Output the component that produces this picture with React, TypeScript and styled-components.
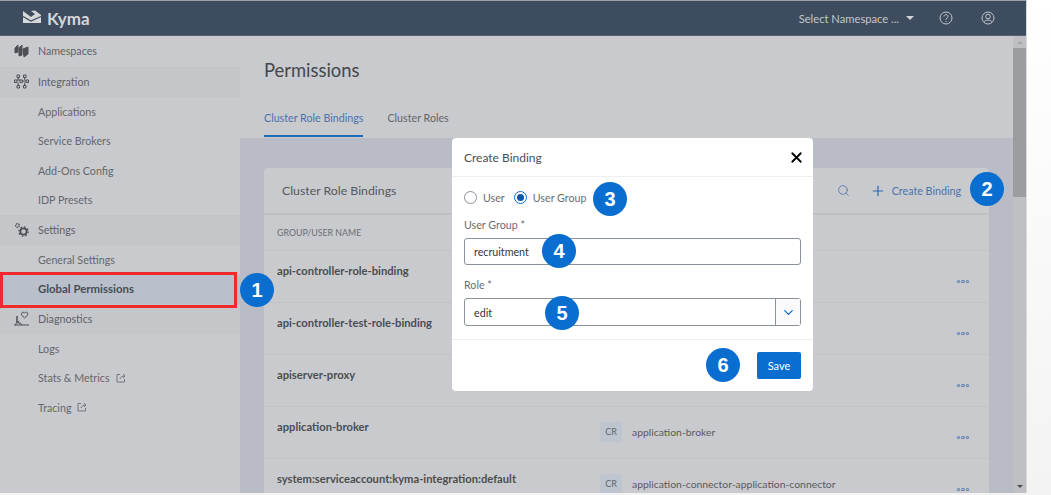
import React from "react";
import styled, {createGlobalStyle} from "styled-components";
import {X, ChevronDown, Search, Plus} from "lucide-react";

const GlobalStyle = createGlobalStyle`
  html, body {
    margin: 0;
    padding: 0;
    background: linear-gradient(#ffffff, #f3f3f3);
    overflow: hidden;
  }
  * {
    box-sizing: border-box;
  }
`;

const Page = styled.div`
  position: relative;
  width: 1051px;
  height: 495px;
  overflow: hidden;
  font-family: Lato, "Noto Sans", sans-serif;
  font-size: 10.7px;
`;
const Shell = styled.div`
  display: flex;
  flex-direction: column;
  width: 1027px;
  height: 493px;
  border-right: 1px solid #d8d9da;
  border-top: 1px solid #9a9ea5;
  background: #c9cacd;
`;
const Header = styled.header`
  display: flex;
  align-items: center;
  flex: 0 0 35px;
  padding: 0 31px 0 22px;
  background: #3d4c5e;
  border-bottom: 1px solid #566272;
  color: #c3c7cd;
`;
const Brand = styled.div`
  display: flex;
  align-items: center;
  gap: 5px;
  margin-right: auto;
  font-size: 17px;
  font-weight: 700;
  color: #d5d7d9;
`;
const NamespaceSelect = styled.div`
  display: flex;
  align-items: center;
  gap: 7px;
  margin-right: 25px;
  font-size: 11.2px;
  white-space: nowrap;
`;
const Caret = styled.span`
  width: 0;
  height: 0;
  border-left: 4px solid transparent;
  border-right: 4px solid transparent;
  border-top: 4px solid #d0d3d7;
`;
const HeaderIcon = styled.svg<{ $gap?: number }>`
  width: 14px;
  height: 14px;
  margin-left: ${p => p.$gap || 0}px;
  fill: none;
  stroke: #c3c7cd;
  stroke-width: 1;
`;
const Body = styled.div`
  display: flex;
  flex: 1;
  min-height: 0;
`;
const Sidebar = styled.nav`
  display: flex;
  flex-direction: column;
  flex: 0 0 240px;
  background: #c9cacd;
`;
const NavGroup = styled.div<{ $band?: boolean }>`
  display: flex;
  align-items: center;
  gap: 9px;
  height: ${p => (p.$band ? "30px" : "31px")};
  padding-left: 14px;
  padding-bottom: 2px;
  background: ${p => (p.$band ? "#c5c6ca" : "transparent")};
  border-top: ${p => (p.$band ? "1px solid #c2c3c7" : "0")};
  color: #5e6268;
`;
const NavIcon = styled.svg`
  width: 15px;
  height: 15px;
  flex: none;
  fill: none;
  stroke: #4c4f54;
  stroke-width: 1;
`;
const NavItem = styled.div<{ $active?: boolean }>`
  display: flex;
  align-items: center;
  gap: 6px;
  height: 29.5px;
  padding-left: 38px;
  padding-bottom: 1px;
  color: ${p => (p.$active ? "#4a4d52" : "#64676d")};
  font-size: ${p => (p.$active ? "11.4px" : "inherit")};
  font-weight: ${p => (p.$active ? 700 : 400)};
`;
const SelectedItem = styled(NavItem)`
  position: relative;
  padding-bottom: 2px;
  background: #b9c0cb;
  &::after {
    content: "";
    position: absolute;
    left: 0;
    top: -3px;
    width: 237px;
    height: 36px;
    box-sizing: border-box;
    border: 3px solid #ee2a2e;
    pointer-events: none;
  }
`;
const ExternalIcon = styled.svg`
  width: 10px;
  height: 10px;
  fill: none;
  stroke: #74777c;
  stroke-width: 1;
`;
const Main = styled.main`
  display: flex;
  flex-direction: column;
  flex: 1;
  min-width: 0;
  overflow: hidden;
`;
const PageHead = styled.div`
  display: flex;
  flex-direction: column;
  flex: 0 0 102px;
  padding: 0 24px;
  background: #c9cacd;
`;
const Title = styled.h1`
  margin: 22px 0 0;
  font-size: 18.4px;
  line-height: 24px;
  font-weight: 400;
  color: #43474d;
`;
const Tabs = styled.div`
  display: flex;
  gap: 24px;
  margin-top: 21px;
`;
const Tab = styled.div<{ $active?: boolean }>`
  height: 34px;
  padding-top: 8px;
  line-height: 14px;
  color: ${p => (p.$active ? "#4a72ae" : "#63666c")};
  border-bottom: ${p => (p.$active ? "2px solid #1f68b5" : "2px solid transparent")};
`;
const Content = styled.div`
  flex: 1;
  padding: 30px 24px 0;
  background: #b9bcc5;
  overflow: hidden;
`;
const Card = styled.section`
  background: #c9cacd;
  border-radius: 4px 4px 0 0;
`;
const CardHead = styled.div`
  display: flex;
  align-items: center;
  height: 47px;
  padding: 0 28px 0 18px;
  border-bottom: 2px solid #c0c1c5;
`;
const CardTitle = styled.h2`
  margin: 0 auto 0 0;
  font-size: 12.3px;
  font-weight: 400;
  color: #55585e;
`;
const CreateButton = styled.div`
  display: flex;
  align-items: center;
  gap: 6px;
  margin-left: 20px;
  color: #4a72ae;
`;
const ColumnHead = styled.div`
  display: flex;
  align-items: center;
  height: 36px;
  padding-left: 13px;
  font-size: 8.8px;
  color: #6a6d73;
  border-bottom: 1px solid #c2c3c7;
`;
const Row = styled.div`
  display: grid;
  grid-template-columns: 323px 1fr 12px;
  height: 52px;
  padding: 0 20px 0 13px;
  border-bottom: 1px solid #c2c3c7;
`;
const RowName = styled.div`
  padding-top: 12px;
  line-height: 16px;
  font-size: 11.2px;
  font-weight: 700;
  color: #4a4d52;
`;
const RoleCell = styled.div`
  display: flex;
  align-items: center;
  gap: 10px;
  padding-bottom: 2px;
  font-size: 10.4px;
  color: #585b61;
`;
const RoleTag = styled.span`
  display: flex;
  align-items: center;
  justify-content: center;
  width: 22px;
  height: 20px;
  border-radius: 2px;
  background: #bec5ce;
  font-size: 9px;
  color: #5f666e;
`;
const Dots = styled.div`
  display: flex;
  align-items: center;
  gap: 1px;
  padding-top: 10px;
`;
const Dot = styled.span`
  width: 3.5px;
  height: 3.5px;
  border-radius: 50%;
  border: 1px solid #5c80b8;
`;
const Scrollbar = styled.div`
  display: flex;
  flex-direction: column;
  align-items: center;
  flex: 0 0 13px;
  background: #bfc0c4;
`;
const ScrollCaret = styled.span<{ $down?: boolean }>`
  flex: none;
  margin: 5px 0;
  width: 0;
  height: 0;
  border-left: 3px solid transparent;
  border-right: 3px solid transparent;
  ${p => (p.$down ? "border-top: 3px solid #4c4d50;" : "border-bottom: 3px solid #a4a5a8;")}
`;
const Thumb = styled.div`
  flex: 0 0 149px;
  width: 100%;
  margin-top: -1px;
  background: #9c9da0;
`;
const ScrollSpace = styled.div`
  flex: 1;
`;
const Dialog = styled.div`
  position: absolute;
  left: 452px;
  top: 138px;
  display: flex;
  flex-direction: column;
  width: 361px;
  height: 253px;
  background: #ffffff;
  border-radius: 4px;
  color: #32363a;
`;
const DialogHead = styled.div`
  display: flex;
  align-items: center;
  justify-content: space-between;
  flex: 0 0 39px;
  padding: 0 8px 0 12px;
  border-bottom: 1px solid #eeeeef;
  font-size: 12px;
  color: #4a4d52;
`;
const DialogBody = styled.div`
  display: flex;
  flex-direction: column;
  flex: 0 0 162px;
  padding: 0 12px;
  border-bottom: 1px solid #eeeeef;
`;
const RadioRow = styled.div`
  display: flex;
  align-items: center;
  gap: 9px;
  height: 41px;
  color: #6a6d72;
`;
const RadioOption = styled.label`
  display: flex;
  align-items: center;
  gap: 6px;
`;
const RadioMark = styled.span<{ $checked?: boolean }>`
  display: flex;
  align-items: center;
  justify-content: center;
  width: 13px;
  height: 13px;
  border-radius: 50%;
  border: 1px solid ${p => (p.$checked ? "#0a6ed1" : "#89919a")};
  &::after {
    content: "";
    display: ${p => (p.$checked ? "block" : "none")};
    width: 7px;
    height: 7px;
    border-radius: 50%;
    background: #0a58a8;
  }
`;
const FieldLabel = styled.div`
  height: 14px;
  line-height: 14px;
  margin-bottom: 6px;
  color: #6a6d72;
`;
const InputBox = styled.div<{ $height: number }>`
  display: flex;
  align-items: center;
  justify-content: space-between;
  width: 337px;
  height: ${p => p.$height}px;
  margin-bottom: 13px;
  padding-left: 9px;
  border: 1px solid #89919a;
  border-radius: 3px;
  color: #32363a;
`;
const SelectButton = styled.span`
  display: flex;
  align-items: center;
  justify-content: center;
  width: 25px;
  height: 100%;
  border-left: 1px solid #89919a;
  background: #fafafa;
`;
const DialogFoot = styled.div`
  display: flex;
  align-items: center;
  justify-content: flex-end;
  flex: 1;
  padding: 0 12px 1px;
`;
const SaveButton = styled.button`
  width: 44px;
  height: 27px;
  padding: 0;
  border: 0;
  border-radius: 2px;
  background: #0a6ed1;
  color: #ffffff;
  font: inherit;
  font-size: 11px;
`;
const Marker = styled.div<{ $x: number; $y: number }>`
  position: absolute;
  left: ${p => p.$x - 17}px;
  top: ${p => p.$y - 17}px;
  display: flex;
  align-items: center;
  justify-content: center;
  width: 34px;
  height: 34px;
  border-radius: 50%;
  background: #0a6ed1;
  color: #ffffff;
  font-family: "Liberation Sans", Arial, sans-serif;
  font-size: 20px;
  font-weight: 700;
`;

const KymaLogo = () => (
  <svg width="20" height="16" viewBox="0 0 20 16">
    <path d="M1 1 L9 7 L13 4 L9 1 L13 0.500 L19 5 V13 H1 Z" fill="#d5d7d9" />
    <path d="M1 6.500 L9 11 L19 6.500" stroke="#3d4c5e" strokeWidth="1.2" fill="none" />
  </svg>
);
const External = () => (
  <ExternalIcon viewBox="0 0 10 10">
    <path d="M4 1.5H1V9H8.5V6" />
    <path d="M4 6C4.5 4 6 3 9 3M7 1l2 2-2 2" />
  </ExternalIcon>
);
const NamespacesIcon = () => (
  <NavIcon viewBox="0 0 15 15">
    <path d="M1 5l3-3v7l-3 1zM5 5l3-3v10l-3 1zM9 6l5-2v7l-4 3z" fill="#4c4f54" />
  </NavIcon>
);
const IntegrationIcon = () => (
  <NavIcon viewBox="0 0 15 15">
    <path d="M3 1h2.500v2.500H3zM9.500 1H12v2.500H9.500zM.5 6H3v2.500H.5zM6 6h2.500v2.500H6zM12 6h2.500v2.500H12zM3 11.500h2.500V14H3zM9.500 11.500H12V14H9.500zM3 6h3M8.500 7h3.500M4.200 3.500V6M10.700 3.500V6M4.200 8.500v3M10.700 8.500v3" />
  </NavIcon>
);
const SettingsIcon = () => (
  <NavIcon viewBox="0 0 15 15">
    <circle cx="3.500" cy="3.500" r="1.800" strokeDasharray="1.500 .6" strokeWidth="1.300" />
    <circle cx="9.500" cy="9.500" r="3.200" strokeWidth="1.800" />
    <circle cx="9.500" cy="9.500" r="4.600" strokeDasharray="1.600 2" strokeWidth="1.400" />
  </NavIcon>
);
const DiagnosticsIcon = () => (
  <NavIcon viewBox="0 0 15 15">
    <path d="M0 14H15M1 14c1 0 1.500-1 2-9 .5 8 1 9 1.500 5 .5 3 1 3 1.500 2s1 2 2 2" />
    <path d="M10.500 7C8.500 5.500 7.500 4 7.500 2.800 7.500 1 9.800.6 10.500 2.200 11.200.6 13.800 1 13.800 2.800 13.800 4 12.500 5.500 10.500 7Z" />
  </NavIcon>
);

const rows = [
  {name: "api-controller-role-binding", role: "api-controller"},
  {name: "api-controller-test-role-binding", role: "api-controller-test"},
  {name: "apiserver-proxy", role: "apiserver-proxy"},
  {name: "application-broker", role: "application-broker"},
  {name: "system:serviceaccount:kyma-integration:default", role: "application-connector-application-connector"},
];

const markers = [
  {n: 1, x: 257, y: 290},
  {n: 2, x: 987, y: 189},
  {n: 3, x: 610, y: 199},
  {n: 4, x: 559, y: 251},
  {n: 5, x: 562, y: 313},
  {n: 6, x: 723, y: 365},
];

const App: React.FC = () => {
  return (
    <Page>
      <GlobalStyle />
      <Shell>
        <Header>
          <Brand>
            <KymaLogo />
            Kyma
          </Brand>
          <NamespaceSelect>
            Select Namespace ...
            <Caret />
          </NamespaceSelect>
          <HeaderIcon viewBox="0 0 14 14">
            <circle cx="7" cy="7" r="6" />
            <path d="M5 5.500C5 3 9 3 9 5.500 9 7 7 7 7 8.800M7 10v1" />
          </HeaderIcon>
          <HeaderIcon viewBox="0 0 14 14" $gap={28}>
            <circle cx="7" cy="7" r="6" />
            <circle cx="7" cy="5.500" r="2.300" />
            <path d="M3 11c1-2.500 7-2.500 8 0" />
          </HeaderIcon>
        </Header>
        <Body>
          <Sidebar>
            <NavGroup>
              <NamespacesIcon />
              Namespaces
            </NavGroup>
            <NavGroup $band>
              <IntegrationIcon />
              Integration
            </NavGroup>
            <NavItem>Applications</NavItem>
            <NavItem>Service Brokers</NavItem>
            <NavItem>Add-Ons Config</NavItem>
            <NavItem>IDP Presets</NavItem>
            <NavGroup $band>
              <SettingsIcon />
              Settings
            </NavGroup>
            <NavItem>General Settings</NavItem>
            <SelectedItem $active>Global Permissions</SelectedItem>
            <NavGroup $band>
              <DiagnosticsIcon />
              Diagnostics
            </NavGroup>
            <NavItem>Logs</NavItem>
            <NavItem>
              Stats &amp; Metrics <External />
            </NavItem>
            <NavItem>
              Tracing <External />
            </NavItem>
          </Sidebar>
          <Main>
            <PageHead>
              <Title>Permissions</Title>
              <Tabs>
                <Tab $active>Cluster Role Bindings</Tab>
                <Tab>Cluster Roles</Tab>
              </Tabs>
            </PageHead>
            <Content>
              <Card>
                <CardHead>
                  <CardTitle>Cluster Role Bindings</CardTitle>
                  <Search size={13} color="#4a72ae" strokeWidth={1.5} />
                  <CreateButton>
                    <Plus size={16} color="#2f68b0" strokeWidth={1.8} />
                    Create Binding
                  </CreateButton>
                </CardHead>
                <ColumnHead>GROUP/USER NAME</ColumnHead>
                {rows.map(row => (
                  <Row key={row.name}>
                    <RowName>{row.name}</RowName>
                    <RoleCell>
                      <RoleTag>CR</RoleTag>
                      {row.role}
                    </RoleCell>
                    <Dots>
                      <Dot />
                      <Dot />
                      <Dot />
                    </Dots>
                  </Row>
                ))}
              </Card>
            </Content>
          </Main>
          <Scrollbar>
            <ScrollCaret />
            <Thumb />
            <ScrollSpace />
            <ScrollCaret $down />
          </Scrollbar>
        </Body>
      </Shell>
      <Dialog>
        <DialogHead>
          Create Binding
          <X size={17} color="#000000" strokeWidth={2.5} />
        </DialogHead>
        <DialogBody>
          <RadioRow>
            <RadioOption>
              <RadioMark />
              User
            </RadioOption>
            <RadioOption>
              <RadioMark $checked />
              User Group
            </RadioOption>
          </RadioRow>
          <FieldLabel>User Group *</FieldLabel>
          <InputBox $height={27}>recruitment</InputBox>
          <FieldLabel>Role *</FieldLabel>
          <InputBox $height={28}>
            edit
            <SelectButton>
              <ChevronDown size={15} color="#0a6ed1" strokeWidth={2} />
            </SelectButton>
          </InputBox>
        </DialogBody>
        <DialogFoot>
          <SaveButton>Save</SaveButton>
        </DialogFoot>
      </Dialog>
      {markers.map(m => (
        <Marker key={m.n} $x={m.x} $y={m.y}>
          {m.n}
        </Marker>
      ))}
    </Page>
  );
};

export default App;
